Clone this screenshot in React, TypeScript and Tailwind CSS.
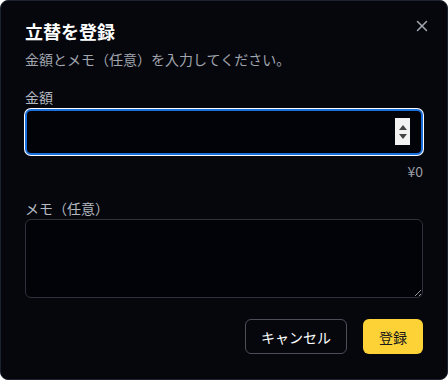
import React from 'react';
import { X } from 'lucide-react';

export default function App() {
  return (
    <div
      className="w-[448px] h-[380px] bg-[#05070d] rounded-lg border border-[#1c2230] relative text-white"
      style={{ fontFamily: '"Noto Sans CJK JP", "Noto Sans", sans-serif' }}
    >
      <button className="absolute right-[16px] top-[16px] text-[#a3a7b0]">
        <X className="w-[18px] h-[18px]" strokeWidth={2} />
      </button>

      <div className="px-6 pt-[16px] flex flex-col">
        <h2 className="text-lg font-bold leading-7">立替を登録</h2>
        <p className="text-sm leading-5 text-[#a1a5ad] mt-[4px]">金額とメモ（任意）を入力してください。</p>

        <label className="text-sm leading-5 text-[#b4b8c0] mt-[18px]">金額</label>
        <div className="relative mt-[2px]">
          <input
            type="text"
            inputMode="numeric"
            className="w-full h-[46px] rounded-md bg-[#020308] border-2 border-[#1a6fe0] shadow-[0_0_0_1px_#ffffff] outline-none px-3 text-sm text-white"
          />
          <div className="absolute right-[13px] top-[9px] w-[15px] h-[27px] bg-[#f2f2f2] flex flex-col items-center justify-center gap-[4px]">
            <svg width="8" height="5" viewBox="0 0 8 5"><path d="M0 5 L4 0 L8 5 Z" fill="#444" /></svg>
            <svg width="8" height="5" viewBox="0 0 8 5"><path d="M0 0 L4 5 L8 0 Z" fill="#444" /></svg>
          </div>
        </div>
        <div className="text-sm leading-5 text-[#9a9ea6] text-right mt-[6px]">¥0</div>

        <label className="text-sm leading-5 text-[#b4b8c0] mt-[17px]">メモ（任意）</label>
        <textarea className="mt-[1px] h-[79px] w-full rounded-md bg-[#020308] border border-[#2c313b] outline-none px-3 py-2 text-sm text-white resize-y" />

        <div className="flex justify-end gap-4 mt-[21px]">
          <button className="h-[35px] w-[102px] rounded-md border border-[#4a4f59] text-sm text-white">キャンセル</button>
          <button className="h-[35px] w-[60px] rounded-md bg-[#fdd236] text-sm text-[#1a1a1a]">登録</button>
        </div>
      </div>
    </div>
  );
}
